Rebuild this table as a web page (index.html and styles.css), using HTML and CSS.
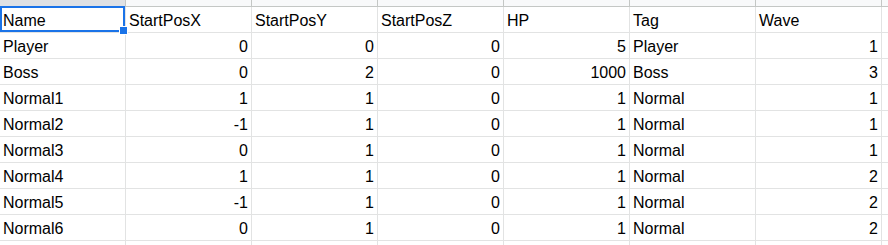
FILE: index.html
```html
<!DOCTYPE html>
<html>
<head>
<meta charset="utf-8">
<link rel="stylesheet" href="styles.css">
</head>
<body>
<div class="sheet">
  <div class="grid">
    <div class="hd sel"></div><div class="hd"></div><div class="hd"></div><div class="hd"></div><div class="hd"></div><div class="hd"></div><div class="hd"></div><div class="hd"></div>

    <div class="c">Name</div><div class="c">StartPosX</div><div class="c">StartPosY</div><div class="c">StartPosZ</div><div class="c">HP</div><div class="c">Tag</div><div class="c">Wave</div><div class="c"></div>

    <div class="c">Player</div><div class="c n">0</div><div class="c n">0</div><div class="c n">0</div><div class="c n">5</div><div class="c">Player</div><div class="c n">1</div><div class="c"></div>

    <div class="c">Boss</div><div class="c n">0</div><div class="c n">2</div><div class="c n">0</div><div class="c n">1000</div><div class="c">Boss</div><div class="c n">3</div><div class="c"></div>

    <div class="c">Normal1</div><div class="c n">1</div><div class="c n">1</div><div class="c n">0</div><div class="c n">1</div><div class="c">Normal</div><div class="c n">1</div><div class="c"></div>

    <div class="c">Normal2</div><div class="c n">-1</div><div class="c n">1</div><div class="c n">0</div><div class="c n">1</div><div class="c">Normal</div><div class="c n">1</div><div class="c"></div>

    <div class="c">Normal3</div><div class="c n">0</div><div class="c n">1</div><div class="c n">0</div><div class="c n">1</div><div class="c">Normal</div><div class="c n">1</div><div class="c"></div>

    <div class="c">Normal4</div><div class="c n">1</div><div class="c n">1</div><div class="c n">0</div><div class="c n">1</div><div class="c">Normal</div><div class="c n">2</div><div class="c"></div>

    <div class="c">Normal5</div><div class="c n">-1</div><div class="c n">1</div><div class="c n">0</div><div class="c n">1</div><div class="c">Normal</div><div class="c n">2</div><div class="c"></div>

    <div class="c">Normal6</div><div class="c n">0</div><div class="c n">1</div><div class="c n">0</div><div class="c n">1</div><div class="c">Normal</div><div class="c n">2</div><div class="c"></div>

    <div class="c"></div><div class="c"></div><div class="c"></div><div class="c"></div><div class="c"></div><div class="c"></div><div class="c"></div><div class="c"></div>
  </div>
  <div class="selection"></div>
  <div class="handle"></div>
</div>
</body>
</html>
```

FILE: styles.css
```css
html, body {
  margin: 0;
  padding: 0;
  background: #ffffff;
}

.sheet {
  position: relative;
  width: 888px;
  height: 245px;
  overflow: hidden;
  font-family: "Liberation Sans", Arial, sans-serif;
  font-size: 16px;
  color: #000000;
}

.grid {
  display: grid;
  grid-template-columns: repeat(8, 126px);
  grid-auto-rows: 26px;
  grid-template-rows: 7px;
}

.hd {
  background: #f8f9fa;
  border-right: 1px solid #c4c7c5;
  border-bottom: 1px solid #c4c7c5;
  box-sizing: border-box;
}

.hd.sel {
  background: #dfe1e4;
}

.c {
  box-sizing: border-box;
  border-right: 1px solid #e2e3e3;
  border-bottom: 1px solid #e2e3e3;
  padding: 2px 3px 0 3px;
  line-height: 23px;
  white-space: nowrap;
  overflow: hidden;
}

.c.n {
  text-align: right;
}

.selection {
  position: absolute;
  left: 0;
  top: 6px;
  width: 125px;
  height: 26px;
  border: 2px solid #1a73e8;
  box-sizing: border-box;
}

.handle {
  position: absolute;
  left: 119px;
  top: 26px;
  width: 7px;
  height: 7px;
  background: #1a73e8;
  border: 1px solid #ffffff;
}
```
